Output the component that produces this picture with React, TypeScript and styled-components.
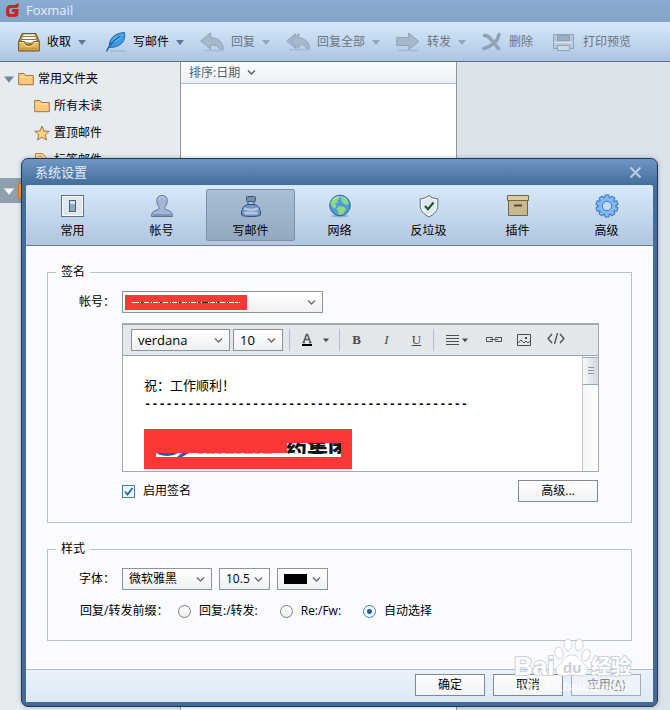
import React from "react";
import styled, { createGlobalStyle, css } from "styled-components";

const GlobalStyle = createGlobalStyle`
  *, *::before, *::after { box-sizing: border-box; }
  html, body, #root { height: 100%; }
  body {
    margin: 0;
    font: 12px/16px "Open Sans", "Noto Sans CJK SC", sans-serif;
    color: #000;
    background: #dce2e9;
  }
  button, select, input { font: inherit; color: inherit; }
  svg { display: block; flex: none; }
`;

/* ---------- main window ---------- */

const Window = styled.div`
  position: relative;
  min-height: 100%;
  display: flex;
  flex-direction: column;
  overflow: hidden;
`;

const TitleBar = styled.header`
  display: flex;
  align-items: center;
  gap: 6px;
  height: 22px;
  padding: 0 5px 2px;
  background: linear-gradient(#8aacd2, #84a4c9);
  color: #e4eef9;
  font-size: 13px;
`;

const Toolbar = styled.nav`
  display: flex;
  align-items: center;
  gap: 16px;
  height: 40px;
  padding: 0 18px;
  background: linear-gradient(#d6e9fa, #bfd4ec 60%, #adc4e0);
  border-bottom: 1px solid #5f7287;
`;

const ToolButton = styled.button`
  display: flex;
  align-items: center;
  gap: 7px;
  padding: 0;
  border: 0;
  background: none;
  color: #000;
  white-space: nowrap;
  &:disabled { color: #69747f; }
`;

const Workspace = styled.div`
  flex: 1;
  display: grid;
  grid-template-columns: 180px 277px 1fr;
`;

const Sidebar = styled.aside`
  background: #e5ebef;
`;

const FolderRow = styled.div<{ $depth: number; $active?: boolean }>`
  display: flex;
  align-items: center;
  gap: 4px;
  height: ${(p) => (p.$active ? 25 : 27)}px;
  padding-left: ${(p) => (p.$depth ? 34 : 4)}px;
  background: ${(p) => (p.$active ? "#8f9fb0" : "none")};
`;

const FolderTree = styled.div`
  padding: 3px 0 5px;
`;

const MailList = styled.section`
  background: #fff;
  border: solid #8d979f;
  border-width: 0 1px;
`;

const SortBar = styled.button`
  display: flex;
  align-items: center;
  gap: 7px;
  width: 100%;
  height: 22px;
  padding: 0 8px;
  border: 0;
  border-bottom: 1px solid #b3b8bd;
  background: linear-gradient(#fafbfd, #edf1f5);
  color: #56606b;
`;

/* ---------- dialog ---------- */

const DialogLayer = styled.div`
  position: absolute;
  inset: 0;
  padding: 158px 12px 0 21px;
`;

const Dialog = styled.section`
  padding: 0 4px 4px;
  border: 1px solid #1d3857;
  border-radius: 7px;
  background: linear-gradient(#6f97c4, #436d9a 26px, #436b96);
  box-shadow: 0 0 4px rgba(40, 60, 90, 0.35);
`;

const DialogTitle = styled.header`
  display: flex;
  align-items: center;
  justify-content: space-between;
  height: 26px;
  padding: 0 11px 0 9px;
  color: #e3edf8;
  font-size: 13px;
`;

const CloseButton = styled.button`
  padding: 0;
  border: 0;
  background: none;
`;

const TabBar = styled.div`
  display: grid;
  grid-template-columns: repeat(7, 1fr);
  padding: 4px 2px;
  border-bottom: 1px solid #6d8097;
  border-radius: 2px 2px 0 0;
  background: linear-gradient(#d8eafa, #b0c5df);
`;

const Tab = styled.button<{ $selected?: boolean }>`
  display: flex;
  flex-direction: column;
  align-items: center;
  gap: 5px;
  height: 52px;
  padding: 4px 0;
  border: 1px solid transparent;
  border-radius: 2px;
  background: none;
  ${(p) =>
    p.$selected &&
    css`
      border-color: #7d90a8;
      background: linear-gradient(#a9bfd5, #94a9c1);
    `}
`;

const Body = styled.div`
  padding: 18px 21px 28px;
  background: #fafbfe;
`;

const Group = styled.fieldset`
  min-width: 0;
  margin: 0;
  padding: 11px 32px 20px 0;
  border: 1px solid #bcc0c6;
  & + & { margin-top: 18px; }
`;

const Legend = styled.legend`
  margin-left: 8px;
  padding: 0 5px;
`;

const FormRow = styled.div`
  display: grid;
  grid-template-columns: 74px 1fr;
  align-items: center;
`;

const FieldLabel = styled.label`
  justify-self: end;
  padding-right: 7px;
`;

const Indented = styled.div`
  margin-left: 74px;
`;

const Inline = styled.div<{ $gap: number }>`
  display: flex;
  align-items: center;
  gap: ${(p) => p.$gap}px;
`;

const SelectBox = styled.div<{ $width: number }>`
  display: grid;
  align-items: center;
  width: ${(p) => p.$width}px;
  height: 22px;
  > * { grid-area: 1 / 1; }
  > svg { justify-self: end; margin-right: 7px; pointer-events: none; }
`;

const NativeSelect = styled.select<{ $size?: number }>`
  appearance: none;
  width: 100%;
  height: 100%;
  padding: 0 18px 0 6px;
  border: 1px solid #8f9296;
  border-radius: 0;
  background: linear-gradient(#fff, #eff0f2);
  font-size: ${(p) => p.$size ?? 12}px;
`;

const Redaction = styled.span`
  display: flex;
  align-items: center;
  justify-content: center;
  width: 122px;
  height: 15px;
  margin: 1px 0 0 3px;
  background: #fb3838;
  pointer-events: none;
`;

const Swatch = styled.span`
  width: 23px;
  height: 10px;
  margin-left: 7px;
  background: #000;
  pointer-events: none;
`;

const Editor = styled.div`
  margin-top: 10px;
  border: 1px solid #a5a9ad;
  border-top-width: 2px;
`;

const EditorBar = styled.div`
  display: flex;
  align-items: center;
  gap: 3px;
  height: 31px;
  padding: 0 8px;
  border-bottom: 1px solid #9aa2a9;
  background: #e2e7eb;
`;

const Divider = styled.span<{ $before?: number }>`
  width: 1px;
  height: 22px;
  margin-left: ${(p) => p.$before ?? 0}px;
  background: #b6bdc4;
`;

const FormatButton = styled.button<{ $width?: number; $gap?: number }>`
  display: flex;
  align-items: center;
  justify-content: center;
  gap: ${(p) => p.$gap ?? 3}px;
  width: ${(p) => p.$width ?? 27}px;
  height: 22px;
  padding: 0;
  border: 0;
  background: none;
  color: #45494e;
  font: 13px/16px "Liberation Serif", serif;
`;

const EditorPane = styled.div`
  display: grid;
  grid-template-columns: 1fr 16px;
  height: 115px;
  background: #fff;
`;

const Signature = styled.div`
  min-width: 0;
  padding: 20px 21px 0;
  overflow: hidden;
  font-size: 13px;
  line-height: 18px;
`;

const DashLine = styled.div`
  font: bold 12px/22px "Liberation Mono", monospace;
  white-space: nowrap;
`;

const SignatureImage = styled.div`
  width: 208px;
  height: 40px;
  margin-top: 13px;
  background: #fb3838;
`;

const ScrollTrack = styled.div`
  padding-top: 1px;
  border-left: 1px solid #c3c9d0;
  background: linear-gradient(90deg, #f3f5f7, #fff);
`;

const ScrollThumb = styled.div`
  display: grid;
  place-items: center;
  height: 28px;
  border: 1px solid #9aa9b8;
  border-width: 1px 0;
  background: linear-gradient(90deg, #f6f8fa, #d3d9e0);
`;

const BetweenRow = styled.div`
  display: flex;
  justify-content: space-between;
  align-items: center;
  margin-top: 8px;
  padding-right: 1px;
`;

const CheckLabel = styled.label`
  display: flex;
  align-items: center;
  gap: 8px;
`;

const CheckHolder = styled.span`
  display: grid;
  place-items: center;
  > * { grid-area: 1 / 1; }
  > svg { pointer-events: none; }
`;

const CheckBox = styled.input`
  appearance: none;
  width: 13px;
  height: 13px;
  margin: 0;
  border: 1px solid #3f7eb5;
  background: #eef6fd;
`;

const Radio = styled.input`
  appearance: none;
  width: 13px;
  height: 13px;
  margin: 0;
  border: 1px solid #7c7f83;
  border-radius: 50%;
  background: linear-gradient(#fff, #eceded);
  &:checked {
    border-color: #3d80bd;
    background: radial-gradient(circle, #275f95 0 2px, #f4faff 3px);
  }
`;

const PushButton = styled.button<{ $width: number }>`
  width: ${(p) => p.$width}px;
  height: 22px;
  padding: 0;
  border: 1px solid #83898f;
  background: linear-gradient(#fefefe, #f1f3f5);
  &:disabled { color: #7f868d; border-color: #a3abb3; background: #edf3f9; }
`;

const StyleRows = styled.div`
  display: grid;
  gap: 12px;
`;

const PrefixRow = styled.div`
  display: flex;
  align-items: center;
  height: 18px;
  padding-left: 32px;
`;

const PrefixLabel = styled.span`
  width: 98px;
`;

const RadioGroup = styled.div`
  display: flex;
  gap: 22px;
`;

const Footer = styled.footer`
  display: flex;
  justify-content: flex-end;
  gap: 8px;
  padding: 4px 12px 6px;
  border-top: 1px solid #b4bdc7;
  background: linear-gradient(#eaf2fa, #dceaf6);
`;

const Watermark = styled.div`
  position: absolute;
  right: 36px;
  top: 636px;
  pointer-events: none;
`;

/* ---------- drawings ---------- */

const Caret = ({ color = "#5f7690", size = 8 }: { color?: string; size?: number }) => (
  <svg width={size} height={size} viewBox="0 0 8 8">
    <path d="M0 2h8L4 7z" fill={color} />
  </svg>
);

const Chevron = ({ color = "#6d7074" }: { color?: string }) => (
  <svg width="9" height="9" viewBox="0 0 9 9">
    <path d="M1 2.500 4.500 6 8 2.500" fill="none" stroke={color} strokeWidth="1.500" />
  </svg>
);

const FoxLogo = () => (
  <svg width="15" height="16" viewBox="0 0 15 16">
    <path
      d="M12.500 1.500 9.500 3H5C2.500 3 1 5 1 8v3c0 2.800 1.500 4 4 4h4.500c2.500 0 4-1.500 4-4V7H7v3h2.500c0 1.500-.5 2-1.500 2H6c-1.200 0-1.700-.6-1.700-2V8c0-1.500.6-2 1.700-2h5c2 0 3-1.500 3-4.500z"
      fill="#c42a22"
    />
  </svg>
);

const InboxIcon = () => (
  <svg width="22" height="20" viewBox="0 0 22 20">
    <path d="M4 1.500h14l3.300 8v9.300H.7V9.500z" fill="#a8883f" stroke="#7b5c22" />
    <path d="M5.500 2.500h11l2.500 8H3z" fill="#fffdf5" />
    <path d="M5 4.500h12M4 7.500h14" stroke="#8d7443" />
    <path d="M.7 9.500h5.800c.4 2.500 2 4 4.500 4s4.100-1.500 4.500-4h5.800v9.300H.7z" fill="#dfb95c" stroke="#7b5c22" />
    <path d="M2 16.500h18" stroke="#c59a3e" strokeWidth="2" />
    <path d="M1.500 10.500h4c.8 2.500 2.500 4 5.500 4s4.700-1.500 5.500-4h4" fill="none" stroke="#f6e3a8" />
  </svg>
);

const QuillIcon = () => (
  <svg width="24" height="22" viewBox="0 0 24 22">
    <path d="M8 20h15" stroke="#9bb2c9" strokeWidth="2" opacity=".6" />
    <path d="M7.500 16.500C6 9 12 2 22.500 1.500c1 6-1 11-7 13.500-3 1.200-5 1.500-8 1.500z" fill="#3b9ae0" stroke="#1f6cae" />
    <path d="M9 12c2-5 6-8 12-9-2.500 6-7 8.500-12 9z" fill="#68b7ee" />
    <path d="M4.500 20.500C7 14 12 9 18.500 5" fill="none" stroke="#1d5b98" strokeWidth="1.300" />
  </svg>
);

const gray = "#a6b8cb";
const grayEdge = "#8fa2b6";

const ReplyIcon = () => (
  <svg width="24" height="20" viewBox="0 0 24 20">
    <path d="M4 18.500h20" stroke="#9db1c6" strokeWidth="1.500" opacity=".7" />
    <path d="M.7 9 10.500 1v4.500c7 .3 12.500 4 12.800 11.500H20c-2-3.500-5-4-9.500-4V17z" fill={gray} stroke={grayEdge} />
  </svg>
);

const ReplyAllIcon = () => (
  <svg width="24" height="20" viewBox="0 0 26 20">
    <path d="M4 18.500h22" stroke="#9db1c6" strokeWidth="1.500" opacity=".7" />
    <path d="M.7 9 10.500 1v16z" fill={gray} stroke={grayEdge} />
    <path d="M5 9l9-8v4.500c6.500.3 11 4 11.300 11.500H22.500c-2-3.500-4.500-4-8.500-4V17z" fill={gray} stroke={grayEdge} />
  </svg>
);

const ForwardIcon = () => (
  <svg width="24" height="20" viewBox="0 0 24 20">
    <path d="M1 18.500h22" stroke="#9db1c6" strokeWidth="1.500" opacity=".7" />
    <path d="M.7 5.500h12V1L23 9.500 12.700 17.500v-4H.7z" fill={gray} stroke={grayEdge} />
  </svg>
);

const DeleteIcon = () => (
  <svg width="20" height="20" viewBox="0 0 20 20">
    <path d="M2.500 3.500c6 0 8 7 14 13M17 2.500c-1 6-7 12-15 14" fill="none" stroke="#8fa2b6" strokeWidth="3.500" strokeLinecap="round" />
  </svg>
);

const PrintIcon = () => (
  <svg width="27" height="20" viewBox="0 0 27 20">
    <g fill="#b9c9da" stroke="#8fa3b8">
      <path d="M4.500 2.500h20v14h-20z" />
      <path d="M8.500 3.500h12v5h-12z" fill="#9bafc3" />
      <path d="M8.500 13.500h12v5h-12z" fill="#cbdaea" />
      <path d="M5 10.500h19" stroke="#dbe6f1" />
    </g>
  </svg>
);

const FolderIcon = () => (
  <svg width="16" height="14" viewBox="0 0 16 14">
    <path d="M.7 12.700V1.500H6l1.500 2h7.800v9.200z" fill="#f9c97c" stroke="#a5743a" />
    <path d="M1.500 5H14" stroke="#fde3b0" />
  </svg>
);

const StarIcon = () => (
  <svg width="16" height="16" viewBox="0 0 16 16">
    <path d="m8 1 2 5 5.200.3-4 3.400L12.600 15 8 12.100 3.400 15l1.400-5.300-4-3.400L6 6z" fill="#fbd58c" stroke="#a5743a" />
  </svg>
);

const TagIcon = () => (
  <svg width="16" height="16" viewBox="0 0 16 16">
    <path d="M1.500 14.500v-13h7l4 4.500-5 8.500z" fill="#fbd9a6" stroke="#d07c2c" />
    <circle cx="6" cy="5.500" r="1.500" fill="#fff" stroke="#d07c2c" />
  </svg>
);

const AccountIcon = () => (
  <svg width="16" height="16" viewBox="0 0 16 16">
    <rect x=".5" y=".5" width="15" height="15" rx="1" fill="#f4a23a" stroke="#d67b17" />
    <path d="M3 4h10v7H3z" fill="#fff1d8" />
  </svg>
);

const CloseIcon = () => (
  <svg width="13" height="13" viewBox="0 0 13 13">
    <path d="m1.500 1.500 10 10M11.500 1.500l-10 10" stroke="#b9cce2" strokeWidth="2.200" />
  </svg>
);

const GeneralIcon = () => (
  <svg width="24" height="24" viewBox="0 0 24 24">
    <rect x=".5" y="1.500" width="22" height="21" fill="#dfe7ec" stroke="#5d738d" />
    <rect x="1.500" y="2.500" width="20" height="19" fill="none" stroke="#f8fbfd" />
    <rect x="8.500" y="6.500" width="6" height="11" fill="#8eaabd" stroke="#4a6279" />
    <rect x="9" y="7" width="5" height="3" fill="#cfe6f0" />
  </svg>
);

const PersonIcon = () => (
  <svg width="24" height="24" viewBox="0 0 24 24">
    <path
      d="M1.500 22.500c0-4 2-5.500 5.500-6.500 2.500-.8 2.800-2 1.800-3.300-1.300-1.700-2-3.700-2-6 0-3.500 2.200-5.200 5.200-5.200s5.200 1.700 5.200 5.200c0 2.300-.7 4.300-2 6-1 1.300-.7 2.500 1.800 3.300 3.500 1 5.500 2.500 5.500 6.500z"
      fill="#a3b4d6"
      stroke="#5f7298"
    />
    <path d="M3 21h18" stroke="#8093bb" strokeWidth="2" />
    <path d="M8.500 6c.3-2 1.500-3.200 3.500-3.200s3.200 1.200 3.500 3.200" fill="none" stroke="#cbd8ef" />
  </svg>
);

const InkIcon = () => (
  <svg width="24" height="24" viewBox="0 0 24 24">
    <path d="M9 6.500h6v5H9z" fill="#a6bedb" stroke="#3f5679" />
    <rect x="7.500" y="2.500" width="9" height="5" rx="1" fill="#7b8db0" stroke="#3f5679" />
    <path d="M8.500 10.500h7c3 1.500 5 2 5 5 0 0 1 1 1 2.500v3c-2 2-17 2-19 0v-3c0-1.500 1-2.500 1-2.500 0-3 2-3.500 5-5z" fill="#7594c4" stroke="#34507d" />
    <path d="M5 14.500c4 1.500 10 1.500 14 0" fill="none" stroke="#b9cfe9" strokeWidth="2" />
    <path d="M5.500 17.500h13v3h-13z" fill="#b2c9e4" />
  </svg>
);

const GlobeIcon = () => (
  <svg width="24" height="24" viewBox="0 0 24 24">
    <ellipse cx="12" cy="22" rx="9" ry="1.500" fill="#93afce" />
    <circle cx="12" cy="11.500" r="10.300" fill="#4e9bdc" stroke="#2f659d" />
    <path d="M2.500 9C4 5 7 2.500 10 2.300l2 2-2.500 2 .5 2-3 1.500 1.500 2-1.500 3-3-2z" fill="#8ed980" />
    <path d="M14 3l5 2.500 2 4.500-3 1-3-2-2-3zM11 12l5 1 2 2-3 5-4 1-1-4-2-2z" fill="#8ed980" />
    <path d="M5 6c3-4 10-4.500 14-.5" fill="none" stroke="#d9f0fc" opacity=".7" />
  </svg>
);

const ShieldIcon = () => (
  <svg width="24" height="24" viewBox="0 0 24 24">
    <path d="M12 1.500c2.500 2 5 3 8.800 3.300v6.700c0 5-3.300 8.500-8.800 11.500-5.500-3-8.800-6.500-8.800-11.500V4.800C7 4.500 9.500 3.500 12 1.500z" fill="#dfe8ec" stroke="#607080" />
    <path d="M12 3.500c2.300 1.500 4.500 2.300 7.500 2.600v5.500c0 4.300-2.800 7.200-7.500 9.900-4.700-2.700-7.500-5.600-7.500-9.900V6.100c3-.3 5.200-1.100 7.500-2.600z" fill="none" stroke="#fff" />
    <path d="m8 12 3 3.200 5.500-6.700" fill="none" stroke="#1f5222" strokeWidth="2" />
  </svg>
);

const PluginIcon = () => (
  <svg width="24" height="24" viewBox="0 0 24 24">
    <path d="M2.500 6.500h19v15h-19z" fill="#c6b98f" stroke="#75653c" />
    <path d="M1.500 1.500h21v5h-21z" fill="#d8cba5" stroke="#75653c" />
    <path d="M8 11.500h8" stroke="#554a2f" strokeWidth="2" />
  </svg>
);

const gearTeeth = Array.from({ length: 10 }, (_, i) => i * 36);

const GearIcon = () => (
  <svg width="24" height="24" viewBox="0 0 24 24">
    <g fill="#3d76ba">
      {gearTeeth.map((a) => (
        <path key={a} d="M9 4l.8-3.500h4.400L15 4z" transform={`rotate(${a} 12 12)`} />
      ))}
      <circle cx="12" cy="12" r="9.300" />
    </g>
    <g fill="#7fbaf7">
      {gearTeeth.map((a) => (
        <path key={a} d="M10 5l.6-3.500h2.800L14 5z" transform={`rotate(${a} 12 12)`} />
      ))}
      <circle cx="12" cy="12" r="8.300" />
    </g>
    <circle cx="12" cy="12" r="4.700" fill="#c7dcf1" stroke="#3d76ba" />
  </svg>
);

const AlignIcon = () => (
  <svg width="13" height="12" viewBox="0 0 13 12">
    <path d="M0 1.500h13M0 4.500h13M0 7.500h13M0 10.500h13" stroke="#4a4e53" />
  </svg>
);

const LinkIcon = () => (
  <svg width="16" height="8" viewBox="0 0 16 8">
    <path d="M6.500 4.500v1h-6v-4h6v1M9.500 2.500v-1h6v4h-6v-1M4 3.500h8" fill="none" stroke="#4a4e53" />
  </svg>
);

const PictureIcon = () => (
  <svg width="14" height="12" viewBox="0 0 14 12">
    <path d="M.5.5h13v11H.5zM1 9l3-3 3 3 2-2 2 2 2-2" fill="none" stroke="#4a4e53" />
    <rect x="8" y="3" width="2" height="2" fill="#4a4e53" />
  </svg>
);

const CodeIcon = () => (
  <svg width="18" height="14" viewBox="0 0 18 14">
    <path d="M5 1 1 5.500 5 10M13 1l4 4.500-4 4.500M10.500 0l-3 11" fill="none" stroke="#4a4e53" strokeWidth="1.300" />
  </svg>
);

const FontColorIcon = () => (
  <svg width="12" height="14" viewBox="0 0 12 14">
    <path d="M2.500 9.500 5.500 1.500h1L9.500 9.500M4 6.500h4M1.500 9.500h2.500M8 9.500h2.500" fill="none" stroke="#55595e" strokeWidth="1.500" />
    <path d="M1 12h10" stroke="#000" strokeWidth="2" />
  </svg>
);

const Grip = () => (
  <svg width="6" height="8" viewBox="0 0 6 8">
    <path d="M0 .5h6M0 3.500h6M0 6.500h6" stroke="#8b98a6" />
  </svg>
);

const Tick = () => (
  <svg width="11" height="11" viewBox="0 0 11 11">
    <path d="m2 5.500 2.500 3L9.500 2" fill="none" stroke="#27679f" strokeWidth="1.800" />
  </svg>
);

const RedactedLine = () => (
  <svg width="108" height="3" viewBox="0 0 108 3">
    <path d="M0 1.500h108" stroke="#fff" strokeDasharray="7 1 3 1 5 2" />
    <path d="M9 1.500h94" stroke="#5b2020" strokeDasharray="2 9 1 7" />
    <path d="M70 1.500h6" stroke="#222" />
  </svg>
);

const LogoStrip = () => (
  <svg width="208" height="40" viewBox="0 0 208 40">
    <defs>
      <clipPath id="strip">
        <path d="M12 24h131V14h54v14H12z" />
      </clipPath>
      <clipPath id="words">
        <path d="M143 14h54v11h-54z" />
      </clipPath>
    </defs>
    <path d="M12 24h131V14h54v14H12z" fill="#fff" />
    <path d="M54 24.500h76" stroke="#f58f8f" strokeDasharray="5 3 9 2" />
    <g clipPath="url(#strip)" fill="#2a5da8">
      <ellipse cx="23" cy="21" rx="12" ry="6" />
      <path d="m38 24-5 4h5l7-4z" />
    </g>
    <g clipPath="url(#words)">
      <text x="142" y="26" fontFamily="Noto Sans CJK SC" fontSize="21" fontWeight="900" fill="#151515">
        药集团
      </text>
    </g>
  </svg>
);

const BaiduMark = () => (
  <svg width="124" height="62" viewBox="0 0 124 62" fontFamily="Liberation Sans, Noto Sans CJK SC, sans-serif">
    <g fill="#fff" fillOpacity=".9" stroke="#ccd1d8" strokeOpacity=".9">
      <ellipse cx="49" cy="17" rx="4" ry="6" transform="rotate(-12 49 17)" />
      <ellipse cx="58" cy="9" rx="4" ry="6" />
      <ellipse cx="69" cy="9" rx="4" ry="6" transform="rotate(8 69 9)" />
      <ellipse cx="76" cy="19" rx="4" ry="6" transform="rotate(18 76 19)" />
      <path d="M62 19c7 0 8 6 13 10s3 11-3 11c-4 0-6-1-10-1s-6 1-10 1c-6 0-8-7-3-11s6-10 13-10z" />
    </g>
    <g fill="#fff" stroke="#ccd1d8" strokeWidth="2" paintOrder="stroke" fontWeight="700">
      <text x="4" y="39" fontSize="26">Bai</text>
      <text x="81" y="38" fontSize="20" fontFamily="Noto Sans CJK SC">经验</text>
    </g>
    <text x="53" y="37" fontSize="15" fontWeight="700" fill="#c9cfd7">du</text>
    <text x="4" y="55" fontSize="13" fontWeight="700" fill="#fff" fillOpacity=".75">
      jingyan.baidu.com
    </text>
  </svg>
);

/* ---------- data ---------- */

const tools = [
  { label: "收取", icon: <InboxIcon />, menu: true, enabled: true },
  { label: "写邮件", icon: <QuillIcon />, menu: true, enabled: true },
  { label: "回复", icon: <ReplyIcon />, menu: true },
  { label: "回复全部", icon: <ReplyAllIcon />, menu: true },
  { label: "转发", icon: <ForwardIcon />, menu: true },
  { label: "删除", icon: <DeleteIcon /> },
  { label: "打印预览", icon: <PrintIcon /> },
];

const tabs = [
  { label: "常用", icon: <GeneralIcon /> },
  { label: "帐号", icon: <PersonIcon /> },
  { label: "写邮件", icon: <InkIcon />, selected: true },
  { label: "网络", icon: <GlobeIcon /> },
  { label: "反垃圾", icon: <ShieldIcon /> },
  { label: "插件", icon: <PluginIcon /> },
  { label: "高级", icon: <GearIcon /> },
];

const prefixes = ["回复:/转发:", "Re:/Fw:", "自动选择"];

type DropDownProps = {
  id?: string;
  name: string;
  value: string;
  width: number;
  size?: number;
  children?: React.ReactNode;
};

const DropDown = ({ id, name, value, width, size, children }: DropDownProps) => (
  <SelectBox $width={width}>
    <NativeSelect id={id} aria-label={name} $size={size}>
      <option>{value}</option>
    </NativeSelect>
    {children}
    <Chevron />
  </SelectBox>
);

export default function App() {
  return (
    <>
      <GlobalStyle />
      <Window>
        <TitleBar>
          <FoxLogo />
          Foxmail
        </TitleBar>
        <Toolbar>
          {tools.map((t) => (
            <ToolButton key={t.label} disabled={!t.enabled}>
              {t.icon}
              {t.label}
              {t.menu && <Caret color={t.enabled ? "#5f7690" : "#92a6bb"} />}
            </ToolButton>
          ))}
        </Toolbar>
        <Workspace>
          <Sidebar>
            <FolderTree>
              <FolderRow $depth={0}>
                <Caret color="#71869b" size={10} />
                <FolderIcon />
                常用文件夹
              </FolderRow>
              <FolderRow $depth={1}>
                <FolderIcon />
                所有未读
              </FolderRow>
              <FolderRow $depth={1}>
                <StarIcon />
                置顶邮件
              </FolderRow>
              <FolderRow $depth={1}>
                <TagIcon />
                标签邮件
              </FolderRow>
            </FolderTree>
            <FolderRow $depth={0} $active>
              <Caret color="#fff" size={10} />
              <AccountIcon />
            </FolderRow>
          </Sidebar>
          <MailList>
            <SortBar>
              排序:日期
              <Chevron color="#56606b" />
            </SortBar>
          </MailList>
        </Workspace>

        <DialogLayer>
          <Dialog role="dialog" aria-labelledby="dialog-title">
            <DialogTitle>
              <span id="dialog-title">系统设置</span>
              <CloseButton aria-label="关闭">
                <CloseIcon />
              </CloseButton>
            </DialogTitle>
            <TabBar role="tablist">
              {tabs.map((t) => (
                <Tab key={t.label} role="tab" aria-selected={!!t.selected} $selected={t.selected}>
                  {t.icon}
                  {t.label}
                </Tab>
              ))}
            </TabBar>
            <Body>
              <Group>
                <Legend>签名</Legend>
                <FormRow>
                  <FieldLabel htmlFor="account">帐号：</FieldLabel>
                  <DropDown id="account" name="帐号" value="" width={201}>
                    <Redaction>
                      <RedactedLine />
                    </Redaction>
                  </DropDown>
                </FormRow>
                <Indented>
                  <Editor>
                    <EditorBar>
                      <DropDown name="字体" value="verdana" width={99} size={13} />
                      <DropDown name="字号" value="10" width={50} size={13} />
                      <Divider $before={3} />
                      <FormatButton $width={43} $gap={10} aria-label="文字颜色">
                        <FontColorIcon />
                        <Caret color="#4a4e53" size={6} />
                      </FormatButton>
                      <Divider />
                      <FormatButton><b>B</b></FormatButton>
                      <FormatButton><i>I</i></FormatButton>
                      <FormatButton><u>U</u></FormatButton>
                      <Divider />
                      <FormatButton $width={40} aria-label="对齐">
                        <AlignIcon />
                        <Caret color="#4a4e53" size={6} />
                      </FormatButton>
                      <FormatButton aria-label="链接"><LinkIcon /></FormatButton>
                      <FormatButton aria-label="图片"><PictureIcon /></FormatButton>
                      <FormatButton $width={32} aria-label="源代码"><CodeIcon /></FormatButton>
                    </EditorBar>
                    <EditorPane>
                      <Signature>
                        <div>祝：工作顺利！</div>
                        <DashLine>{"-".repeat(45)}</DashLine>
                        <SignatureImage>
                          <LogoStrip />
                        </SignatureImage>
                      </Signature>
                      <ScrollTrack>
                        <ScrollThumb>
                          <Grip />
                        </ScrollThumb>
                      </ScrollTrack>
                    </EditorPane>
                  </Editor>
                  <BetweenRow>
                    <CheckLabel>
                      <CheckHolder>
                        <CheckBox type="checkbox" defaultChecked />
                        <Tick />
                      </CheckHolder>
                      启用签名
                    </CheckLabel>
                    <PushButton $width={80}>高级...</PushButton>
                  </BetweenRow>
                </Indented>
              </Group>
              <Group>
                <Legend>样式</Legend>
                <StyleRows>
                  <FormRow>
                    <FieldLabel htmlFor="face">字体：</FieldLabel>
                    <Inline $gap={7}>
                      <DropDown id="face" name="字体" value="微软雅黑" width={90} />
                      <DropDown name="字号" value="10.5" width={51} />
                      <DropDown name="颜色" value="" width={51}>
                        <Swatch />
                      </DropDown>
                    </Inline>
                  </FormRow>
                  <PrefixRow>
                    <PrefixLabel id="prefix">回复/转发前缀：</PrefixLabel>
                    <RadioGroup role="radiogroup" aria-labelledby="prefix">
                      {prefixes.map((p, i) => (
                        <CheckLabel key={p}>
                          <Radio type="radio" name="prefix" defaultChecked={i === 2} />
                          {p}
                        </CheckLabel>
                      ))}
                    </RadioGroup>
                  </PrefixRow>
                </StyleRows>
              </Group>
            </Body>
            <Footer>
              <PushButton $width={70}>确定</PushButton>
              <PushButton $width={70}>取消</PushButton>
              <PushButton $width={70} disabled>
                应用(<u>A</u>)
              </PushButton>
            </Footer>
          </Dialog>
        </DialogLayer>
        <Watermark>
          <BaiduMark />
        </Watermark>
      </Window>
    </>
  );
}
